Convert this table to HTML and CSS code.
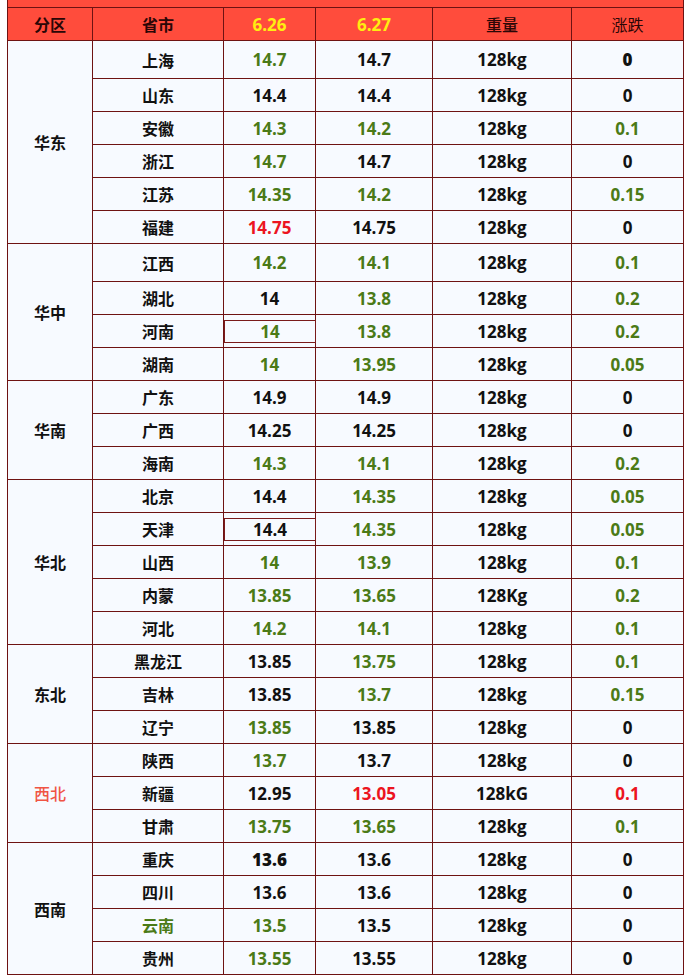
FILE: index.html
```html
<!DOCTYPE html>
<html lang="zh">
<head>
<meta charset="utf-8">
<title>生猪价格</title>
<link rel="stylesheet" href="styles.css">
</head>
<body>
<div class="sheet">
  <div class="strip"></div>
  <div class="grid">
    <div class="hd">分区</div><div class="hd">省市</div><div class="hd yel">6.26</div><div class="hd yel">6.27</div><div class="hd med">重量</div><div class="hd thin">涨跌</div>

    <div class="area s6">华东</div>
    <div class="c p tall">上海</div><div class="c g">14.7</div><div class="c">14.7</div><div class="c">128kg</div><div class="c xb">0</div>
    <div class="c p">山东</div><div class="c">14.4</div><div class="c">14.4</div><div class="c">128kg</div><div class="c">0</div>
    <div class="c p">安徽</div><div class="c g">14.3</div><div class="c g">14.2</div><div class="c">128kg</div><div class="c g">0.1</div>
    <div class="c p">浙江</div><div class="c g">14.7</div><div class="c">14.7</div><div class="c">128kg</div><div class="c">0</div>
    <div class="c p">江苏</div><div class="c g">14.35</div><div class="c g">14.2</div><div class="c">128kg</div><div class="c g">0.15</div>
    <div class="c p">福建</div><div class="c r">14.75</div><div class="c">14.75</div><div class="c">128kg</div><div class="c">0</div>

    <div class="area s4">华中</div>
    <div class="c p tall">江西</div><div class="c g">14.2</div><div class="c g">14.1</div><div class="c">128kg</div><div class="c g">0.1</div>
    <div class="c p">湖北</div><div class="c">14</div><div class="c g">13.8</div><div class="c">128kg</div><div class="c g">0.2</div>
    <div class="c p">河南</div><div class="c g"><span class="box">14</span></div><div class="c g">13.8</div><div class="c">128kg</div><div class="c g">0.2</div>
    <div class="c p">湖南</div><div class="c g">14</div><div class="c g">13.95</div><div class="c">128kg</div><div class="c g">0.05</div>

    <div class="area s3">华南</div>
    <div class="c p">广东</div><div class="c">14.9</div><div class="c">14.9</div><div class="c">128kg</div><div class="c">0</div>
    <div class="c p">广西</div><div class="c">14.25</div><div class="c">14.25</div><div class="c">128kg</div><div class="c">0</div>
    <div class="c p">海南</div><div class="c g">14.3</div><div class="c g">14.1</div><div class="c">128kg</div><div class="c g">0.2</div>

    <div class="area s5">华北</div>
    <div class="c p">北京</div><div class="c">14.4</div><div class="c g">14.35</div><div class="c">128kg</div><div class="c g">0.05</div>
    <div class="c p">天津</div><div class="c"><span class="box">14.4</span></div><div class="c g">14.35</div><div class="c">128kg</div><div class="c g">0.05</div>
    <div class="c p">山西</div><div class="c g">14</div><div class="c g">13.9</div><div class="c">128kg</div><div class="c g">0.1</div>
    <div class="c p">内蒙</div><div class="c g">13.85</div><div class="c g">13.65</div><div class="c">128Kg</div><div class="c g">0.2</div>
    <div class="c p">河北</div><div class="c g">14.2</div><div class="c g">14.1</div><div class="c">128kg</div><div class="c g">0.1</div>

    <div class="area s3">东北</div>
    <div class="c p">黑龙江</div><div class="c">13.85</div><div class="c g">13.75</div><div class="c">128kg</div><div class="c g">0.1</div>
    <div class="c p">吉林</div><div class="c">13.85</div><div class="c g">13.7</div><div class="c">128kg</div><div class="c g">0.15</div>
    <div class="c p">辽宁</div><div class="c g">13.85</div><div class="c">13.85</div><div class="c">128kg</div><div class="c">0</div>

    <div class="area s3 red-label">西北</div>
    <div class="c p">陕西</div><div class="c g">13.7</div><div class="c">13.7</div><div class="c">128kg</div><div class="c">0</div>
    <div class="c p">新疆</div><div class="c">12.95</div><div class="c r">13.05</div><div class="c">128kG</div><div class="c r">0.1</div>
    <div class="c p">甘肃</div><div class="c g">13.75</div><div class="c g">13.65</div><div class="c">128kg</div><div class="c g">0.1</div>

    <div class="area s4">西南</div>
    <div class="c p">重庆</div><div class="c xb">13.6</div><div class="c">13.6</div><div class="c">128kg</div><div class="c">0</div>
    <div class="c p">四川</div><div class="c">13.6</div><div class="c">13.6</div><div class="c">128kg</div><div class="c">0</div>
    <div class="c p g">云南</div><div class="c g">13.5</div><div class="c">13.5</div><div class="c">128kg</div><div class="c">0</div>
    <div class="c p">贵州</div><div class="c g">13.55</div><div class="c">13.55</div><div class="c">128kg</div><div class="c">0</div>
  </div>
</div>
</body>
</html>
```
FILE: styles.css
```css
html, body {
  margin: 0;
  padding: 0;
  background: #ffffff;
}
body {
  font-family: "Open Sans", "Noto Sans CJK SC", sans-serif;
  color: #111111;
}
.sheet {
  margin-left: 7px;
  width: 677px;
}
.strip {
  height: 7px;
  background: #ff4c3c;
  border-left: 1px solid #6e1212;
  border-right: 1px solid #6e1212;
  box-sizing: border-box;
}
.grid {
  display: grid;
  grid-template-columns: 84px 130px 91px 116px 138px 111px;
  grid-auto-rows: minmax(32px, auto);
  gap: 1px;
  padding: 1px;
  background: #6e1212;
}
.hd {
  background: #ff4c3c;
  display: flex;
  align-items: center;
  justify-content: center;
  font-family: "Noto Sans CJK SC", sans-serif;
  font-size: 16px;
  font-weight: 700;
  color: #2a0606;
}
.hd.yel {
  font-family: "Open Sans", sans-serif;
  font-size: 17px;
  color: #ffee10;
}
.hd.med { font-weight: 500; }
.hd.thin { font-weight: 400; }
.c {
  background: #f7faff;
  display: flex;
  align-items: center;
  justify-content: center;
  font-size: 17px;
  font-weight: 700;
  color: #111111;
}
.c.p {
  font-family: "Noto Sans CJK SC", sans-serif;
  font-size: 16px;
}
.c.tall { height: 37px; }
.c.g { color: #4b7a17; }
.c.r { color: #ec1420; }
.c.xb { font-weight: 800; }
.area {
  background: #f7faff;
  display: flex;
  align-items: center;
  justify-content: center;
  font-family: "Noto Sans CJK SC", sans-serif;
  font-size: 16px;
  font-weight: 700;
  color: #111111;
}
.area.red-label {
  color: #f05444;
  font-weight: 500;
}
.s6 { grid-row: span 6; }
.s5 { grid-row: span 5; }
.s4 { grid-row: span 4; }
.s3 { grid-row: span 3; }
.box {
  width: 92px;
  height: 23px;
  margin-right: -1px;
  box-sizing: border-box;
  border: 1px solid #7a1a1a;
  display: flex;
  align-items: center;
  justify-content: center;
}
```
